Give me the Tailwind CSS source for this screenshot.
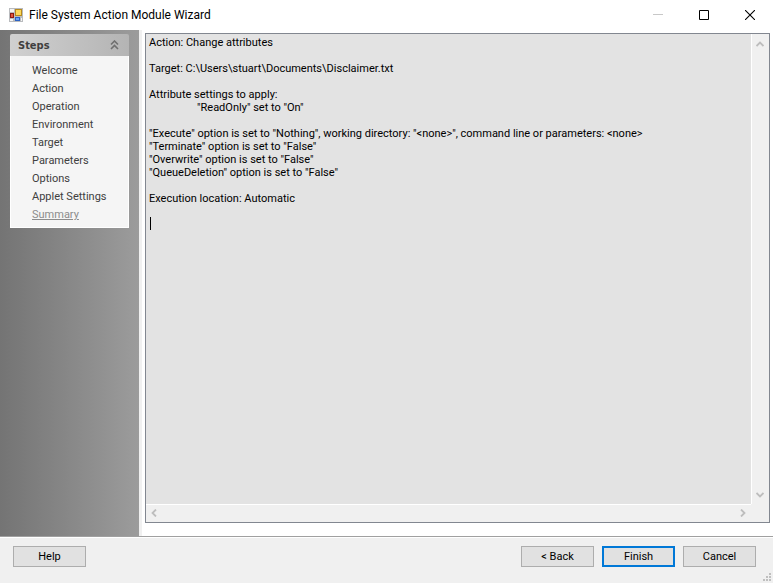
<!DOCTYPE html>
<html lang="en">
  <head>
    <meta charset="UTF-8" />
    <meta name="viewport" content="width=device-width, initial-scale=1" />
    <title>File System Action Module Wizard</title>
    <script src="https://cdn.jsdelivr.net/npm/@tailwindcss/browser@4"></script>
  </head>
  <body class="flex h-screen flex-col overflow-hidden bg-white font-['Roboto','Liberation_Sans',sans-serif] text-[11px] leading-[13px] text-black">
    <!-- Title bar -->
    <header class="flex h-[30px] shrink-0 items-center pl-[9px]">
      <svg class="h-[14px] w-[14px]" viewBox="0 0 14 14">
        <rect width="14" height="14" fill="#b9bbbe" />
        <path d="M1 1h4v3H1zM1 11h3v2H1zM12 10h1v3h-1z" fill="#f4f4f4" />
        <rect x="6" y="1" width="7" height="7" fill="#b78a1e" />
        <rect x="7" y="2" width="5" height="5" fill="#fbd85a" />
        <rect x="1" y="5" width="4" height="5" fill="#8d1b14" />
        <rect x="2" y="6" width="2" height="3" fill="#e2563c" />
        <rect x="6" y="9" width="5" height="4" fill="#2c62c4" />
        <rect x="7" y="10" width="3" height="2" fill="#6ca6f5" />
      </svg>
      <h1 class="ml-[6px] grow text-[12px] leading-[16px]">File System Action Module Wizard</h1>
      <button class="flex h-[30px] w-[46px] items-center justify-center" aria-label="Minimize" disabled>
        <svg class="h-[10px] w-[10px]" viewBox="0 0 10 10"><path d="M0 4.500h10" stroke="#c8c8c8" /></svg>
      </button>
      <button class="flex h-[30px] w-[46px] items-center justify-center" aria-label="Maximize">
        <svg class="h-[10px] w-[10px]" viewBox="0 0 10 10"><path d="M.5.5h9v9h-9z" fill="none" stroke="#000" /></svg>
      </button>
      <button class="flex h-[30px] w-[46px] items-center justify-center" aria-label="Close">
        <svg class="h-[10px] w-[10px]" viewBox="0 0 10 10"><path d="M0 0l10 10M10 0L0 10" stroke="#000" stroke-width="1.1" /></svg>
      </button>
    </header>

    <main class="flex min-h-0 grow">
      <!-- Steps -->
      <aside class="w-[142px] shrink-0 border-r-[3px] border-[#f0f0f0] bg-linear-to-r from-[#747474] to-[#9c9c9c] pt-1 pr-[10px] pl-[10px]">
        <div class="flex h-[22px] items-center justify-between rounded-t-[2px] bg-linear-to-r from-[#d0d0d0] to-[#b4b4b4] pr-[10px] pl-2">
          <h2 class="font-['DejaVu_Sans_Condensed','DejaVu_Sans',sans-serif] font-bold text-[#3f3f3f]">Steps</h2>
          <button aria-label="Collapse">
            <svg class="h-[10px] w-[9px]" viewBox="0 0 9 10"><path d="M1 4.500l3.500-3.500L8 4.500M1 9l3.500-3.500L8 9" fill="none" stroke="#707070" stroke-width="1.600" /></svg>
          </button>
        </div>
        <nav class="border border-t-0 border-white bg-[#f5f5f5] pt-[6px] pb-[3px] pl-[21px] leading-[18px] text-[#404040]">
          <ul>
            <li><a href="#">Welcome</a></li>
            <li><a href="#">Action</a></li>
            <li><a href="#">Operation</a></li>
            <li><a href="#">Environment</a></li>
            <li><a href="#">Target</a></li>
            <li><a href="#">Parameters</a></li>
            <li><a href="#">Options</a></li>
            <li><a href="#">Applet Settings</a></li>
            <li><a href="#" class="text-[#8c8c8c] underline" aria-current="step">Summary</a></li>
          </ul>
        </nav>
      </aside>

      <!-- Summary text -->
      <section class="flex min-w-0 grow pt-[3px] pr-[3px] pb-[13px] pl-[3px]">
        <div class="grid min-w-0 grow grid-cols-[minmax(0,1fr)_16px] grid-rows-[minmax(0,1fr)_16px] border border-[#828790] bg-[#f0f0f0] pr-[2px] pb-[2px]">
          <div class="relative">
            <textarea class="block h-full w-full resize-none overflow-hidden bg-[#e3e3e3] px-[3px] py-[2px] caret-transparent outline-none [tab-size:48px]" aria-label="Summary" wrap="off" readonly>
Action: Change attributes

Target: C:\Users\stuart\Documents\Disclaimer.txt

Attribute settings to apply:
&#9;"ReadOnly" set to "On"

"Execute" option is set to "Nothing", working directory: "&lt;none&gt;", command line or parameters: &lt;none&gt;
"Terminate" option is set to "False"
"Overwrite" option is set to "False"
"QueueDeletion" option is set to "False"

Execution location: Automatic

</textarea>
            <!-- text cursor on the last line -->
            <span class="absolute top-[183px] left-1 h-[13px] w-px bg-black"></span>
          </div>
          <div class="flex flex-col items-center justify-between border-l border-white pt-[7px] pb-[6px]">
            <button aria-label="Scroll up"><svg class="h-[6px] w-2" viewBox="0 0 8 6"><path d="M.5 5L4 1.500 7.500 5" fill="none" stroke="#bdbdbd" stroke-width="1.800" /></svg></button>
            <button aria-label="Scroll down"><svg class="h-[6px] w-2" viewBox="0 0 8 6"><path d="M.5 1L4 4.500 7.500 1" fill="none" stroke="#bdbdbd" stroke-width="1.800" /></svg></button>
          </div>
          <div class="flex items-center justify-between border-t border-white px-[5px]">
            <button aria-label="Scroll left"><svg class="h-2 w-[6px]" viewBox="0 0 6 8"><path d="M5 .5L1.500 4 5 7.500" fill="none" stroke="#bdbdbd" stroke-width="1.800" /></svg></button>
            <button aria-label="Scroll right"><svg class="h-2 w-[6px]" viewBox="0 0 6 8"><path d="M1 .5L4.500 4 1 7.500" fill="none" stroke="#bdbdbd" stroke-width="1.800" /></svg></button>
          </div>
        </div>
      </section>
    </main>

    <!-- Wizard buttons -->
    <footer class="relative h-[47px] shrink-0 border-t border-[#a0a0a0] bg-[#f0f0f0]">
      <div class="flex gap-2 border-t border-white pt-2 pr-[17px] pl-[13px]">
        <button class="mr-auto h-[21px] w-[73px] border border-[#adadad] bg-[#e1e1e1]">Help</button>
        <button class="h-[21px] w-[73px] border border-[#adadad] bg-[#e1e1e1]">&lt; Back</button>
        <button class="h-[21px] w-[73px] border-2 border-[#0078d7] bg-[#e1e1e1]">Finish</button>
        <button class="h-[21px] w-[73px] border border-[#adadad] bg-[#e1e1e1]">Cancel</button>
      </div>
      <svg class="absolute right-[2px] bottom-[2px] h-2 w-2" viewBox="0 0 8 8"><path d="M6 0h2v2H6zM3 3h2v2H3zM6 3h2v2H6zM0 6h2v2H0zM3 6h2v2H3zM6 6h2v2H6z" fill="#bfbfbf" /></svg>
    </footer>
  </body>
</html>
